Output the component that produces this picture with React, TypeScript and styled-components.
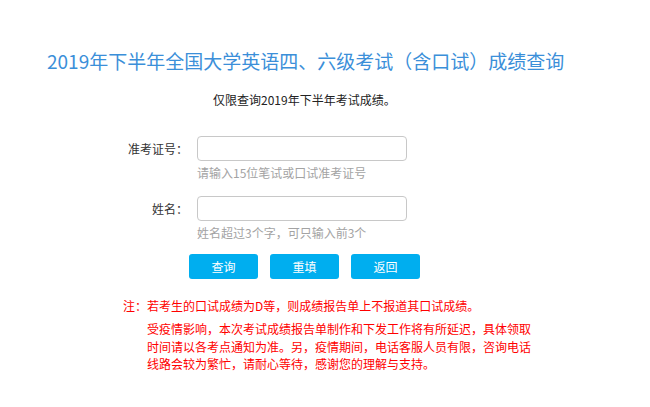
import React from "react";
import styled, { createGlobalStyle } from "styled-components";

const Global = createGlobalStyle`
  html, body { margin: 0; padding: 0; background: #fff; }
  body { font-family: "Noto Sans CJK SC", "Noto Sans", sans-serif; color: #333; }
  * { box-sizing: border-box; }
`;

const Page = styled.div`
  width: 650px;
  padding-top: 48px;
`;

const Title = styled.h1`
  margin: 0;
  padding-left: 47px;
  font-size: 19px;
  line-height: 26px;
  font-weight: 400;
  color: #3b8fd9;
  white-space: nowrap;
`;

const Subtitle = styled.p`
  margin: 17px 0 0;
  padding-left: 213px;
  font-size: 12px;
  line-height: 18px;
  color: #222;
`;

const Form = styled.div`
  display: grid;
  grid-template-columns: 188px 210px;
  column-gap: 9px;
  row-gap: 15px;
  margin-top: 27px;
`;

const Label = styled.label`
  text-align: right;
  font-size: 12px;
  line-height: 25px;
  color: #333;
`;

const Field = styled.div`
  display: flex;
  flex-direction: column;
  gap: 4px;
`;

const Input = styled.input`
  width: 210px;
  height: 25px;
  border: 1px solid #c8c8c8;
  border-radius: 4px;
  padding: 0 6px;
  font-size: 12px;
  outline: none;
`;

const Hint = styled.span`
  font-size: 12px;
  line-height: 16px;
  color: #a3a3a3;
`;

const Buttons = styled.div`
  display: flex;
  gap: 12px;
  margin: 13px 0 0 189px;
`;

const Button = styled.button`
  width: 69px;
  height: 25px;
  border: none;
  border-radius: 3px;
  background: #00aeef;
  color: #fff;
  font-family: inherit;
  font-size: 12px;
  padding: 0;
  cursor: pointer;
`;

const Note = styled.div`
  display: flex;
  margin: 18px 0 0 123px;
  color: #ff0000;
  font-size: 12px;
`;

const NoteLabel = styled.span`
  line-height: 18px;
  flex: none;
`;

const NoteBody = styled.div`
  width: 390px;
  display: flex;
  flex-direction: column;
  gap: 5px;
`;

const NoteLine = styled.p`
  margin: 0;
  line-height: 18px;
`;

const NotePara = styled.p`
  margin: 0;
  line-height: 17.5px;
`;

export default function App() {
  return (
    <Page>
      <Global />
      <Title>2019年下半年全国大学英语四、六级考试（含口试）成绩查询</Title>
      <Subtitle>仅限查询2019年下半年考试成绩。</Subtitle>
      <Form>
        <Label>准考证号：</Label>
        <Field>
          <Input type="text" />
          <Hint>请输入15位笔试或口试准考证号</Hint>
        </Field>
        <Label>姓名：</Label>
        <Field>
          <Input type="text" />
          <Hint>姓名超过3个字，可只输入前3个</Hint>
        </Field>
      </Form>
      <Buttons>
        <Button>查询</Button>
        <Button>重填</Button>
        <Button>返回</Button>
      </Buttons>
      <Note>
        <NoteLabel>注：</NoteLabel>
        <NoteBody>
          <NoteLine>若考生的口试成绩为D等，则成绩报告单上不报道其口试成绩。</NoteLine>
          <NotePara>
            受疫情影响，本次考试成绩报告单制作和下发工作将有所延迟，具体领取时间请以各考点通知为准。另，疫情期间，电话客服人员有限，咨询电话线路会较为繁忙，请耐心等待，感谢您的理解与支持。
          </NotePara>
        </NoteBody>
      </Note>
    </Page>
  );
}
